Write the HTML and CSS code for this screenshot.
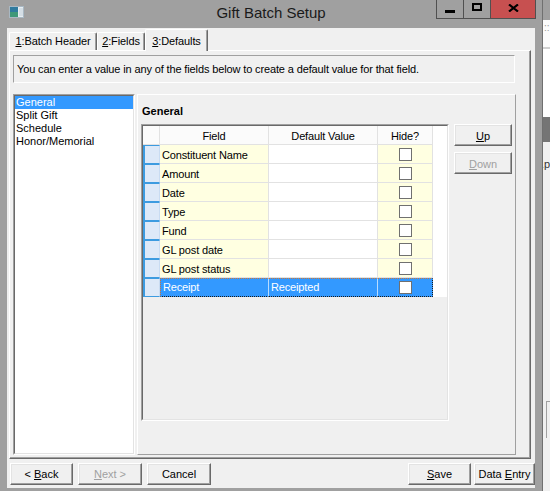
FILE: index.html
```html
<!DOCTYPE html>
<html>
<head>
<meta charset="utf-8">
<title>Gift Batch Setup</title>
<link rel="stylesheet" href="styles.css">
</head>
<body>
<div class="screen">
  <div class="window">
    <div class="titlebar">
      <svg class="app-icon" width="15" height="12" viewBox="0 0 15 12">
        <rect x="0.5" y="0.5" width="14" height="11" fill="#e6edf2" stroke="#a9b8c3"/>
        <rect x="1" y="1" width="8" height="10" fill="#2f7a9e"/>
        <rect x="1" y="6" width="8" height="5" fill="#3f9878"/>
        <rect x="10" y="2" width="4" height="8" fill="#d4dee5"/>
      </svg>
      <div class="title">Gift Batch Setup</div>
      <div class="caption">
        <div class="cbtn cmin"><span class="min-glyph"></span></div>
        <div class="cbtn cmax"><span class="max-glyph"></span></div>
        <div class="cbtn cclose">
          <svg width="11" height="8" viewBox="0 0 11 8"><path d="M1 0.5 L10 7.5 M10 0.5 L1 7.5" stroke="#000" stroke-width="2.2" fill="none"/></svg>
        </div>
      </div>
    </div>
    <div class="client">
      <div class="tabs">
        <div class="tab tab1"><u>1</u>:Batch Header</div>
        <div class="tab tab2"><u>2</u>:Fields</div>
        <div class="tab tab3 active"><u>3</u>:Defaults</div>
      </div>
      <div class="page">
        <div class="info">You can enter a value in any of the fields below to create a default value for that field.</div>
        <div class="main">
          <div class="listbox">
            <div class="listbox-in">
              <div class="li sel">General</div>
              <div class="li">Split Gift</div>
              <div class="li">Schedule</div>
              <div class="li">Honor/Memorial</div>
            </div>
          </div>
          <div class="panel">
            <div class="panel-title">General</div>
            <div class="panel-body">
              <div class="grid">
                <div class="grid-in">
                  <div class="grow ghead">
                    <div class="c"></div><div class="c">Field</div><div class="c">Default Value</div><div class="c">Hide?</div><div class="c fill"></div>
                  </div>
                  <div class="grow"><div class="c rh"></div><div class="c fc">Constituent Name</div><div class="c dc"></div><div class="c hc"><span class="chk"></span></div><div class="c fill"></div></div>
                  <div class="grow"><div class="c rh"></div><div class="c fc">Amount</div><div class="c dc"></div><div class="c hc"><span class="chk"></span></div><div class="c fill"></div></div>
                  <div class="grow"><div class="c rh"></div><div class="c fc">Date</div><div class="c dc"></div><div class="c hc"><span class="chk"></span></div><div class="c fill"></div></div>
                  <div class="grow"><div class="c rh"></div><div class="c fc">Type</div><div class="c dc"></div><div class="c hc"><span class="chk"></span></div><div class="c fill"></div></div>
                  <div class="grow"><div class="c rh"></div><div class="c fc">Fund</div><div class="c dc"></div><div class="c hc"><span class="chk"></span></div><div class="c fill"></div></div>
                  <div class="grow"><div class="c rh"></div><div class="c fc">GL post date</div><div class="c dc"></div><div class="c hc"><span class="chk"></span></div><div class="c fill"></div></div>
                  <div class="grow"><div class="c rh"></div><div class="c fc">GL post status</div><div class="c dc"></div><div class="c hc"><span class="chk"></span></div><div class="c fill"></div></div>
                  <div class="grow selrow"><div class="c rh"></div><div class="c fc">Receipt</div><div class="c dc">Receipted</div><div class="c hc"><span class="chk"></span></div><div class="c fill"></div></div>
                </div>
              </div>
              <div class="side">
                <div class="btn side-btn"><u>U</u>p</div>
                <div class="btn side-btn disabled"><u>D</u>own</div>
              </div>
            </div>
          </div>
        </div>
      </div>
      <div class="footer">
        <div class="btn b-back">&lt; <u>B</u>ack</div>
        <div class="btn b-next disabled"><u>N</u>ext &gt;</div>
        <div class="btn b-cancel">Cancel</div>
        <div class="spacer"></div>
        <div class="btn b-save"><u>S</u>ave</div>
        <div class="btn b-entry">Data <u>E</u>ntry</div>
      </div>
    </div>
  </div>
  <div class="behind">
    <div class="bh1"></div>
    <div class="bh2">::</div>
    <div class="bh3"></div>
    <div class="bh4"></div>
    <div class="bh5"></div>
    <div class="bh6">
      <div class="bh-text">.p</div>
      <div class="bh-box"></div>
    </div>
  </div>
</div>
</body>
</html>
```
FILE: styles.css
```css
body {
  margin: 0;
  background: #a0a0a0;
  font-family: "Liberation Sans", Arial, sans-serif;
  font-size: 11px;
  color: #000;
}

.screen {
  display: flex;
  width: 550px;
  height: 491px;
  overflow: hidden;
}

.window {
  width: 542px;
  background: #a0a0a0;
  border-right: 1px solid #707070;
  display: flex;
  flex-direction: column;
}

/* title bar */
.titlebar {
  height: 28px;
  display: grid;
  grid-template-columns: 1fr auto 1fr;
}
.app-icon {
  margin: 6px 0 0 9px;
}
.title {
  font-size: 15px;
  line-height: 26px;
  color: #1a1a1a;
}
.caption {
  justify-self: end;
  align-self: start;
  display: flex;
  height: 19px;
  margin-right: 6px;
  box-sizing: border-box;
  border: 1px solid #505050;
  border-top: none;
}
.cbtn {
  display: flex;
  align-items: center;
  justify-content: center;
  height: 18px;
}
.cmin { width: 26px; border-right: 1px solid #505050; }
.cmax { width: 26px; border-right: 1px solid #505050; }
.cclose { width: 44px; background: #c75050; padding-bottom: 3px; box-sizing: border-box; }
.min-glyph {
  width: 10px;
  height: 3px;
  background: #000;
  margin-top: 5px;
}
.max-glyph {
  width: 10px;
  height: 8px;
  box-sizing: border-box;
  border: 2px solid #000;
  margin-bottom: 4px;
}

/* client */
.client {
  margin: 0 7px 3px 7px;
  width: 528px;
  height: 460px;
  background: #f0f0f0;
}

.tabs {
  display: flex;
  align-items: flex-end;
  height: 22px;
  padding-left: 2px;
}
.tab {
  box-sizing: border-box;
  height: 18px;
  border: 1px solid #fff;
  border-bottom: none;
  border-right-color: #696969;
  box-shadow: inset -1px 0 #a0a0a0;
  border-radius: 2px 2px 0 0;
  padding-top: 1px;
  line-height: 14px;
  text-align: center;
  white-space: nowrap;
  letter-spacing: -0.1px;
}
.tab1 { width: 88px; }
.tab2 { width: 48px; }
.tab3 { width: 63px; }
.tab.active {
  height: 22px;
  margin-bottom: -1px;
  padding-top: 4px;
  background: #f0f0f0;
  position: relative;
  z-index: 1;
}

.page {
  margin-left: 2px;
  width: 522px;
  height: 409px;
  box-sizing: border-box;
  border: 1px solid;
  border-color: #fff #696969 #696969 #fff;
  box-shadow: inset -1px -1px #a0a0a0;
  padding: 4px 0 0 3px;
}

.info {
  width: 502px;
  height: 28px;
  box-sizing: border-box;
  border: 1px solid;
  border-color: #a0a0a0 #fff #fff #a0a0a0;
  padding: 6px 0 0 3px;
  line-height: 14px;
  letter-spacing: -0.13px;
  white-space: nowrap;
}

.main {
  display: flex;
  gap: 2px;
  margin-top: 11px;
}

.listbox {
  width: 122px;
  height: 361px;
  box-sizing: border-box;
  border: 1px solid;
  border-color: #a0a0a0 #fff #fff #a0a0a0;
}
.listbox-in {
  height: 100%;
  box-sizing: border-box;
  border: 1px solid;
  border-color: #696969 #e3e3e3 #e3e3e3 #696969;
  background: #fff;
}
.li {
  line-height: 13px;
  padding-left: 1px;
}
.li.sel {
  background: #3399ff;
  color: #fff;
}

.panel {
  width: 379px;
  height: 361px;
  box-sizing: border-box;
  border: 1px solid;
  border-color: #fff #a0a0a0 #a0a0a0 #fff;
  padding: 10px 0 0 3px;
}
.panel-title {
  font-weight: bold;
  line-height: 13px;
  margin-left: 1px;
}
.panel-body {
  display: flex;
  align-items: flex-start;
  gap: 5px;
  margin-top: 6px;
}

/* grid */
.grid {
  width: 308px;
  height: 297px;
  box-sizing: border-box;
  border: 1px solid;
  border-color: #a0a0a0 #fff #fff #a0a0a0;
}
.grid-in {
  height: 100%;
  box-sizing: border-box;
  border: 1px solid;
  border-color: #696969 #e3e3e3 #e3e3e3 #696969;
  background: #efefef;
}
.grow {
  display: grid;
  grid-template-columns: 17px 109px 109px 55px 1fr;
  height: 19px;
}
.c {
  box-sizing: border-box;
  border-right: 1px solid #e2e2e2;
  border-bottom: 1px solid #e2e2e2;
  line-height: 18px;
  padding: 1px 0 0 2px;
  white-space: nowrap;
  overflow: hidden;
  letter-spacing: -0.15px;
}
.ghead .c {
  background: #fbfbfb;
  text-align: center;
  padding-left: 0;
}
.c.fill {
  background: #fff;
  border: none;
}
.ghead .c.fill { background: #fff; }
.rh {
  background: #dde9f8;
  border: 1px solid #3c9be0;
  border-left-width: 2px;
  border-right-color: #c9dcf2;
}
.fc { background: #ffffe1; }
.dc { background: #fff; }
.hc {
  background: #ffffe1;
  display: flex;
  align-items: center;
  justify-content: center;
  padding: 0;
}
.chk {
  width: 13px;
  height: 13px;
  box-sizing: border-box;
  border: 1px solid #707070;
  background: #fff;
}

.selrow .fc,
.selrow .dc,
.selrow .hc {
  background: #3399ff;
  color: #fff;
  border-top: 1px dotted #c9773a;
  border-bottom: 1px dotted #1a1a1a;
  border-right-color: #b9dcff;
  line-height: 17px;
}
.selrow .fc,
.selrow .dc { padding-top: 0; }
.selrow .fc { border-left: 1px dotted #c9773a; }
.selrow .hc { border-right: 1px dotted #1a1a1a; }

/* buttons */
.btn {
  box-sizing: border-box;
  height: 22px;
  border: 1px solid;
  border-color: #fff #696969 #696969 #fff;
  box-shadow: inset -1px -1px #a0a0a0, inset 1px 1px #e3e3e3;
  background: #f0f0f0;
  line-height: 20px;
  text-align: center;
  white-space: nowrap;
}
.disabled { color: #a0a0a0; }

.side {
  display: flex;
  flex-direction: column;
  gap: 6px;
}
.side-btn {
  width: 58px;
  padding-top: 1px;
}

.footer {
  display: flex;
  gap: 5px;
  margin-top: 4px;
  padding-left: 3px;
}
.spacer { flex: 1; }
.b-back { width: 63px; }
.b-next { width: 64px; }
.b-cancel { width: 64px; }
.b-save { width: 63px; }
.b-entry { width: 61px; margin-left: -2px; }

/* window behind */
.behind {
  width: 7px;
  display: flex;
  flex-direction: column;
  background: #f0f0f0;
  overflow: hidden;
}
.bh1 { height: 20px; background: #a0a0a0; }
.bh2 {
  height: 27px;
  background: #fbfbfb;
  color: #9a9a9a;
  font-size: 10px;
  line-height: 16px;
  padding-left: 1px;
  box-sizing: border-box;
}
.bh3 { height: 2px; background: #d0d0d0; }
.bh4 { height: 68px; background: #fff; }
.bh5 { height: 25px; background: #757575; }
.bh6 { flex: 1; }
.bh-text {
  margin-top: 16px;
  margin-left: -2px;
  line-height: 13px;
  color: #333;
}
.bh-box {
  margin: 230px 0 0 3px;
  height: 36px;
  border-left: 1px solid #a0a0a0;
  border-top: 1px solid #a0a0a0;
}
```
